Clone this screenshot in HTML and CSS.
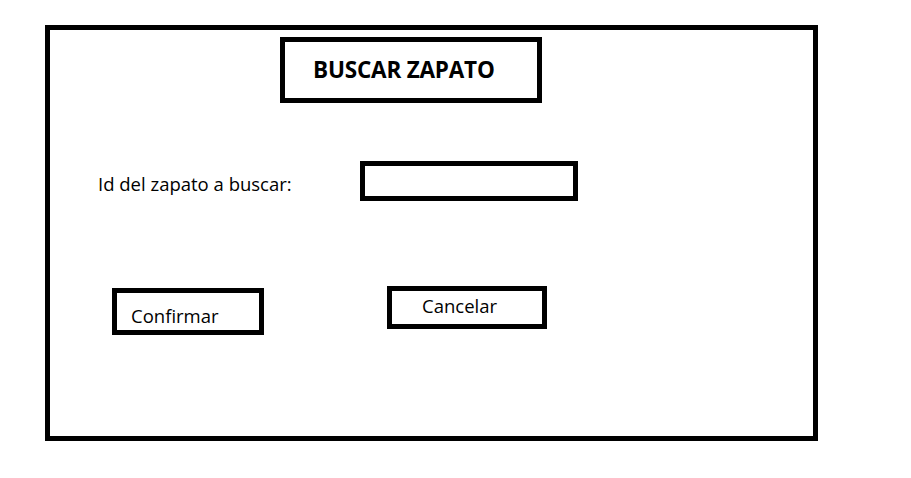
FILE: index.html
```html
<!DOCTYPE html>
<html>
<head>
  <meta charset="UTF-8">
  <meta name="viewport" content="width=device-width, initial-scale=1.0">
  <title>Buscar zapato</title>
  <link rel="stylesheet" href="styles.css">
</head>
<body>
  <div class="frame">
    <div class="title-row">
      <h1 class="title">BUSCAR ZAPATO</h1>
    </div>

    <div class="field-row">
      <label for="shoeId">Id del zapato a buscar:</label>
      <input type="text" id="shoeId">
    </div>

    <div class="actions">
      <button class="button confirm">Confirmar</button>
      <button class="button cancel">Cancelar</button>
    </div>
  </div>
</body>
</html>
```

FILE: styles.css
```css
body {
  font-family: "Open Sans", Lato, Arial, sans-serif;
  margin: 0;
  padding: 0;
  background: #fff;
  color: #000;
}
.frame {
  box-sizing: border-box;
  width: 773px;
  height: 416px;
  margin: 25px 0 0 45px;
  border: 5px solid #000;
  display: flex;
  flex-direction: column;
}
.title-row {
  display: flex;
  padding: 7px 0 0 230px;
}
.title {
  box-sizing: border-box;
  width: 262px;
  height: 66px;
  margin: 0;
  border: 5px solid #000;
  padding-left: 28px;
  font-size: 22.5px;
  font-weight: bold;
  letter-spacing: -0.2px;
  line-height: 56px;
}
.field-row {
  display: flex;
  align-items: center;
  margin-top: 58px;
  padding-left: 48px;
}
.field-row label {
  width: 262px;
  font-size: 18.5px;
  padding-top: 4px;
}
.field-row input {
  box-sizing: border-box;
  width: 218px;
  height: 40px;
  border: 5px solid #000;
  border-radius: 0;
  outline: none;
}
.actions {
  display: flex;
  align-items: flex-start;
  gap: 123px;
  margin-top: 85px;
  padding-left: 62px;
}
.button {
  box-sizing: border-box;
  border: 5px solid #000;
  background: #fff;
  font-family: inherit;
  font-size: 18.5px;
  text-align: left;
  padding: 0;
  color: #000;
}
.confirm {
  width: 152px;
  height: 47px;
  margin-top: 2px;
  padding: 8px 0 0 14px;
}
.cancel {
  width: 160px;
  height: 43px;
  padding: 0 0 4px 30px;
}
```
